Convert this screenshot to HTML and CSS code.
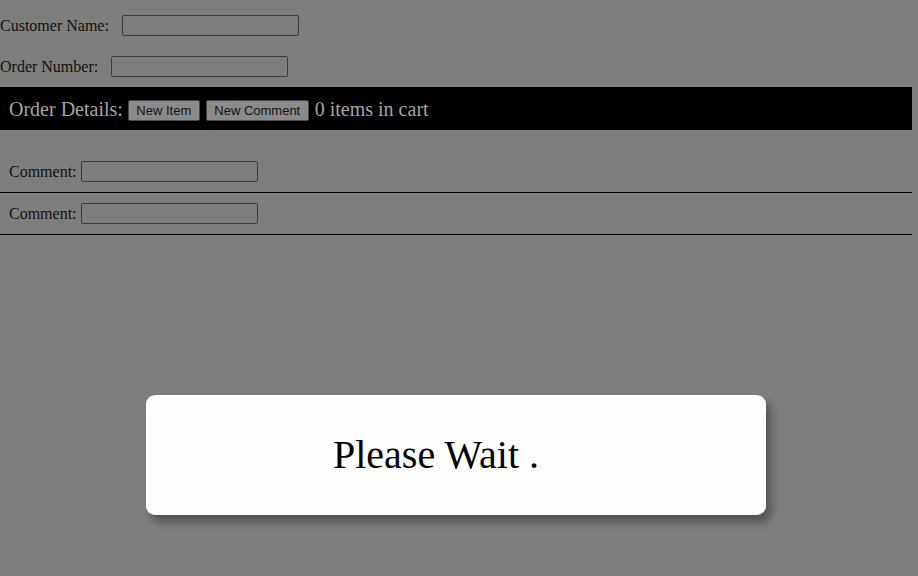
FILE: index.html
```html
<!DOCTYPE html>
<html>
<head>
<meta charset="utf-8">
<link rel="stylesheet" href="styles.css">
</head>
<body>
<div class="field first">
  <label>Customer Name:</label>
  <input class="box cust" type="text">
</div>
<div class="field">
  <label>Order Number:</label>
  <input class="box order" type="text">
</div>
<div class="bar">
  <span class="bar-title">Order Details:</span>
  <button class="btn">New Item</button>
  <button class="btn">New Comment</button>
  <span class="bar-count">0 items in cart</span>
</div>
<div class="comments">
  <div class="comment">
    <label>Comment:</label>
    <input class="box" type="text">
  </div>
  <div class="comment">
    <label>Comment:</label>
    <input class="box" type="text">
  </div>
</div>
<div class="modal">
  <div class="modal-text">Please Wait .<span class="ghost"> . .</span></div>
</div>
</body>
</html>
```
FILE: styles.css
```css
html, body {
  margin: 0;
  padding: 0;
  background: #7e7f7c;
  font-family: "Liberation Serif", "Times New Roman", serif;
  font-size: 16px;
  color: #111;
  height: 100%;
}
body { position: relative; }
.field {
  display: flex;
  align-items: center;
  height: 21px;
  margin-top: 20px;
}
.field.first { margin-top: 15px; }
.field label { line-height: 21px; }
.box {
  box-sizing: border-box;
  width: 177px;
  height: 21px;
  border: 1px solid #3d3e3c;
  border-radius: 2px;
  background: #7e7f7c;
  margin: 0;
  padding: 0;
}
.cust { margin-left: 13px; }
.order { margin-left: 13px; }
.bar {
  margin-top: 10px;
  width: 912px;
  height: 43px;
  box-sizing: border-box;
  background: #000;
  display: flex;
  align-items: center;
  padding-left: 9px;
  padding-top: 2px;
  color: #a4a4a4;
  font-size: 20px;
}
.bar-title { margin-right: 5px; }
.btn {
  box-sizing: border-box;
  height: 21px;
  margin: 2px 6px 0 0;
  padding: 0 7.5px;
  font-family: "Liberation Sans", Arial, sans-serif;
  font-size: 13px;
  color: #141414;
  background: #8a8a8a;
  border: 1px solid #4a4a4a;
  border-radius: 2px;
}
.comments { margin-top: 21px; width: 912px; }
.comment {
  display: flex;
  align-items: center;
  height: 41px;
  padding-left: 9px;
  border-bottom: 1px solid #000;
}
.comment label { margin-right: 4px; }
.modal {
  position: absolute;
  left: 146px;
  top: 395px;
  width: 620px;
  height: 120px;
  background: #fefefe;
  border-radius: 9px;
  box-shadow: 5px 7px 8px rgba(0, 0, 0, 0.35);
  display: flex;
  align-items: center;
  justify-content: center;
}
.modal-text {
  font-size: 40px;
  color: #000;
  margin-bottom: 2px;
  white-space: pre;
}
.ghost { visibility: hidden; }
```
